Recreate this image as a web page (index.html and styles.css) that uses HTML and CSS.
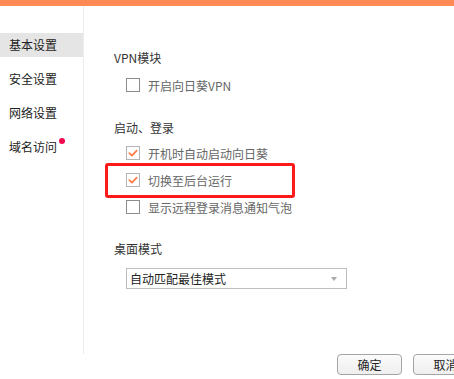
FILE: index.html
```
<!DOCTYPE html>
<html lang="zh-CN">
<head>
<meta charset="utf-8">
<link rel="stylesheet" href="styles.css">
</head>
<body>
<div class="window">
  <div class="topbar"></div>
  <div class="main">
    <nav class="sidebar">
      <div class="nav-item active">基本设置</div>
      <div class="nav-item">安全设置</div>
      <div class="nav-item">网络设置</div>
      <div class="nav-item">域名访问<span class="dot"></span></div>
    </nav>
    <section class="content">
      <div class="heading">VPN模块</div>
      <div class="row first">
        <span class="cb"></span><span class="label">开启向日葵VPN</span>
      </div>

      <div class="heading h2">启动、登录</div>
      <div class="row tight">
        <span class="cb checked"><svg viewBox="0 0 14 14" width="14" height="14"><path d="M3.3 7.2 L5.9 9.6 L10.7 4.6" fill="none" stroke="#ff7a45" stroke-width="1.7" stroke-linecap="round" stroke-linejoin="round"/></svg></span><span class="label">开机时自动启动向日葵</span>
      </div>
      <div class="row highlight">
        <span class="cb checked"><svg viewBox="0 0 14 14" width="14" height="14"><path d="M3.3 7.2 L5.9 9.6 L10.7 4.6" fill="none" stroke="#ff7a45" stroke-width="1.7" stroke-linecap="round" stroke-linejoin="round"/></svg></span><span class="label">切换至后台运行</span>
        <span class="redbox"></span>
      </div>
      <div class="row">
        <span class="cb"></span><span class="label">显示远程登录消息通知气泡</span>
      </div>

      <div class="heading h3">桌面模式</div>
      <div class="select">
        <span class="select-text">自动匹配最佳模式</span>
        <span class="arrow"></span>
      </div>
    </section>
  </div>
  <div class="footer">
    <button class="btn">确定</button>
    <button class="btn">取消</button>
  </div>
</div>
</body>
</html>
```
FILE: styles.css
```
html, body {
  margin: 0;
  padding: 0;
  background: #fff;
  overflow: hidden;
}
.window {
  width: 454px;
  height: 379px;
  overflow: hidden;
  font-family: "Noto Sans CJK SC", "Noto Sans", sans-serif;
  font-size: 12px;
  color: #333;
}
.topbar {
  height: 6px;
  background: #ff8a55;
}
.main {
  display: flex;
  height: 348px;
}
.sidebar {
  width: 83px;
  flex: none;
  border-right: 1px solid #ececec;
  padding-top: 27px;
  display: flex;
  flex-direction: column;
  gap: 10px;
}
.nav-item {
  height: 24px;
  line-height: 24px;
  padding-left: 9px;
  color: #222;
  font-size: 12px;
  position: relative;
}
.nav-item.active {
  background: #e5e5e5;
}
.dot {
  position: absolute;
  left: 59px;
  top: 3px;
  width: 6px;
  height: 6px;
  border-radius: 50%;
  background: #f2084f;
}
.content {
  flex: 1;
  padding-top: 42px;
  padding-left: 30px;
}
.heading {
  height: 20px;
  line-height: 20px;
  color: #333;
}
.h2 { margin-top: 23px; }
.h3 { margin-top: 22px; }
.row {
  display: flex;
  align-items: center;
  height: 20px;
  margin-left: 12px;
  margin-top: 7px;
  position: relative;
}
.row.first { margin-top: 7px; }
.row.tight { margin-top: 5px; }
.cb {
  width: 14px;
  height: 14px;
  box-sizing: border-box;
  border: 1px solid #8c8c8c;
  background: #fff;
  flex: none;
  position: relative;
}
.cb.checked {
  border-color: #b4b4b4;
}
.cb svg {
  position: absolute;
  left: -1px;
  top: -1px;
}
.label {
  margin-left: 8px;
  color: #666;
}
.redbox {
  position: absolute;
  left: -21px;
  top: -7px;
  width: 190px;
  height: 35px;
  box-sizing: border-box;
  border: 3px solid #ff1a1a;
  border-radius: 3px;
}
.select {
  margin-top: 9px;
  margin-left: 12px;
  width: 221px;
  height: 21px;
  box-sizing: border-box;
  border: 1px solid #bdbdbd;
  display: flex;
  align-items: center;
  justify-content: space-between;
  padding: 0 9px 0 3px;
}
.select-text {
  color: #222;
}
.arrow {
  width: 0;
  height: 0;
  border-left: 3.5px solid transparent;
  border-right: 3.5px solid transparent;
  border-top: 4px solid #a8a8a8;
}
.footer {
  display: flex;
  gap: 11px;
  padding-left: 337px;
}
.btn {
  flex: none;
  width: 65px;
  height: 21px;
  padding: 0;
  border: 1px solid #a5a5a5;
  border-radius: 4px;
  background: linear-gradient(#fbfbfb, #efefef);
  font-family: "Noto Sans CJK SC", "Noto Sans", sans-serif;
  font-size: 12px;
  color: #222;
  line-height: 19px;
}
```
